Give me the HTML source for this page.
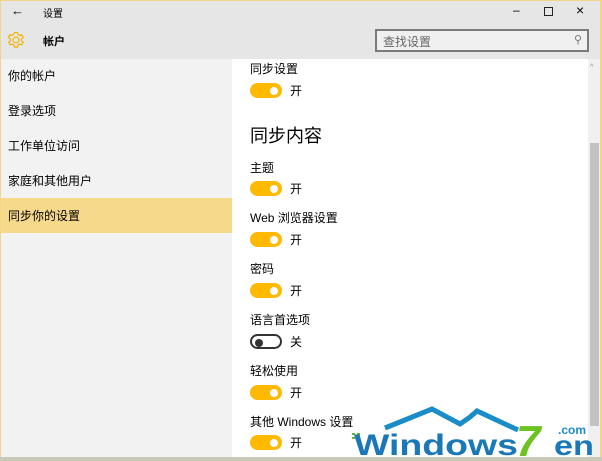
<!DOCTYPE html>
<html><head><meta charset="utf-8"><style>
*{margin:0;padding:0;box-sizing:border-box}
body{width:602px;height:461px;overflow:hidden;position:relative;background:#fff;font-family:"Liberation Sans","Noto Sans CJK SC",sans-serif;color:#000}
.abs{position:absolute}
#top{left:0;top:0;width:602px;height:59px;background:#e6e6e6}
#side{left:0;top:59px;width:232px;height:402px;background:#f2f2f2}
.si{position:absolute;left:8px;font-size:12px;line-height:16px}
.lbl{position:absolute;left:250px;font-size:12px;line-height:16px}
.tg{position:absolute;left:250px;width:32px;height:15px;border-radius:8px;background:#ffb900}
.tg::after{content:"";position:absolute;right:4px;top:3.5px;width:8px;height:8px;border-radius:50%;background:#fff}
.tg.off{background:#fff;border:2px solid #333}
.tg.off::after{left:3px;top:2.5px;right:auto;background:#333}
.st{position:absolute;left:290px;font-size:12px;line-height:16px}
</style></head><body>
<div id="top" class="abs"></div>
<div class="abs" style="left:0;top:0;width:602px;height:1px;background:#f3d48a"></div>
<div class="abs" style="left:11px;top:3px;font-size:13px">&#8592;</div>
<div class="abs" style="left:43px;top:5px;font-size:10px">设置</div>
<svg class="abs" style="left:7px;top:31px" width="18" height="18" viewBox="0 0 18 18"><g fill="none" stroke="#f0b400" stroke-width="1.2"><circle cx="9" cy="9" r="3"/><path d="M7.5 1.5h3l.5 2 1.7 1 2-.7 1.5 2.6-1.5 1.4v2l1.5 1.4-1.5 2.6-2-.7-1.7 1-.5 2h-3l-.5-2-1.7-1-2 .7-1.5-2.6 1.5-1.4v-2L1.3 6.4l1.5-2.6 2 .7 1.7-1z"/></g></svg>
<div class="abs" style="left:43px;top:33px;font-size:11px;font-weight:bold">帐户</div>
<div class="abs" style="left:513px;top:3px;font-size:12px">&#8211;</div>
<div class="abs" style="left:544px;top:7px;width:9px;height:9px;border:1px solid #222"></div>
<div class="abs" style="left:576px;top:2px;font-size:14px">&#215;</div>
<div class="abs" style="left:375px;top:29px;width:214px;height:23px;border:2px solid #7a7a7a;background:#f0f0f0"></div>
<div class="abs" style="left:383px;top:33px;font-size:12px;color:#666">查找设置</div>
<div class="abs" style="left:574px;top:33px;font-size:11px;color:#777">&#9906;</div>
<div id="side" class="abs"></div>
<div class="abs" style="left:0;top:198px;width:232px;height:35px;background:#f7d98c"></div>
<div class="si" style="top:68px">你的帐户</div>
<div class="si" style="top:103px">登录选项</div>
<div class="si" style="top:138px">工作单位访问</div>
<div class="si" style="top:173px">家庭和其他用户</div>
<div class="si" style="top:208px">同步你的设置</div>
<div class="lbl" style="top:61px">同步设置</div><div class="tg" style="top:83px"></div><div class="st" style="top:83px">开</div>
<div class="abs" style="left:250px;top:124px;font-size:18px;line-height:24px">同步内容</div>
<div class="lbl" style="top:160px">主题</div><div class="tg" style="top:181px"></div><div class="st" style="top:181px">开</div>
<div class="lbl" style="top:210px">Web 浏览器设置</div><div class="tg" style="top:232px"></div><div class="st" style="top:232px">开</div>
<div class="lbl" style="top:261px">密码</div><div class="tg" style="top:283px"></div><div class="st" style="top:283px">开</div>
<div class="lbl" style="top:312px">语言首选项</div><div class="tg off" style="top:334px"></div><div class="st" style="top:334px">关</div>
<div class="lbl" style="top:363px">轻松使用</div><div class="tg" style="top:385px"></div><div class="st" style="top:385px">开</div>
<div class="lbl" style="top:414px">其他 Windows 设置</div><div class="tg" style="top:435px"></div><div class="st" style="top:435px">开</div>
<div class="abs" style="left:588px;top:59px;width:12px;height:400px;background:#f0f0f0"></div>
<div class="abs" style="left:590px;top:64px;font-size:7px;color:#888">^</div>
<div class="abs" style="left:590px;top:143px;width:9px;height:283px;background:#c2c2c2"></div>
<div class="abs" style="left:600px;top:0;width:2px;height:461px;background:#f3d48a"></div>
<div class="abs" style="left:0;top:0;width:1px;height:461px;background:#f3d48a"></div>
<svg class="abs" style="left:350px;top:400px" width="252" height="61" viewBox="0 0 252 61">
<polyline points="35,28 82,9 110,24 120,17 127,11 168,30" fill="none" stroke="#1a8cc8" stroke-width="5" stroke-linejoin="miter"/>
<rect x="2" y="33" width="3" height="2" fill="#5bb82a"/><rect x="7" y="33" width="3" height="2" fill="#5bb82a"/><rect x="2" y="37" width="3" height="2" fill="#5bb82a"/><rect x="7" y="37" width="3" height="2" fill="#5bb82a"/>
<text x="4" y="55" font-family="Liberation Sans" font-weight="bold" font-size="30" fill="#1a78b8" textLength="164" lengthAdjust="spacingAndGlyphs">Windows</text>
<text x="166" y="56" font-family="Liberation Sans" font-weight="bold" font-style="italic" font-size="44" fill="#6cc21e">7</text>
<text x="204" y="55" font-family="Liberation Sans" font-weight="bold" font-size="28" fill="#1a78b8" textLength="40" lengthAdjust="spacingAndGlyphs">en</text>
<text x="208" y="34" font-family="Liberation Sans" font-weight="bold" font-size="12" fill="#1a8cc8">.com</text>
</svg>
<div class="abs" style="left:0;top:457px;width:602px;height:4px;background:#c9c9b8"></div>
</body></html>
